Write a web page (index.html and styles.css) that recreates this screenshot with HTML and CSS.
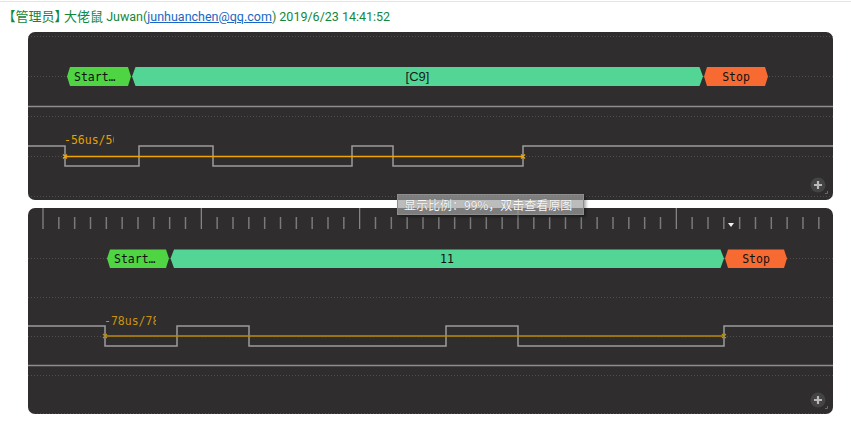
FILE: index.html
```html
<!DOCTYPE html>
<html lang="zh-CN">
<head>
<meta charset="utf-8">
<title>消息</title>
<link rel="stylesheet" href="styles.css">
</head>
<body>
<div class="msg">
  <div class="meta"><span class="role">【管理员】</span><span class="nick">大佬鼠</span> Juwan(<a class="mail" href="#">junhuanchen@qq.com</a>) 2019/6/23 14:41:52</div>
  <div class="shots">
    <div class="panel panel-a">
      <svg class="wave" width="805" height="168" viewBox="0 0 805 168">
        <g class="dots">
          <line x1="0" y1="4.5" x2="805" y2="4.5"/>
          <line x1="0" y1="44.5" x2="805" y2="44.5"/>
          <line x1="0" y1="84.5" x2="805" y2="84.5"/>
          <line x1="0" y1="124.5" x2="805" y2="124.5"/>
          <line x1="0" y1="164.5" x2="805" y2="164.5"/>
        </g>
        <line class="divider" x1="0" y1="74.5" x2="805" y2="74.5"/>
        <polygon class="lbl-start" points="39,44.5 42,35 100,35 103,44.5 100,54 42,54"/>
        <polygon class="lbl-data" points="104,44.5 107.5,35 671.5,35 675,44.5 671.5,54 107.5,54"/>
        <polygon class="lbl-stop" points="676,44.5 679,35 737,35 740,44.5 737,54 679,54"/>
        <text class="t-mono" x="46" y="49">Start…</text>
        <text class="t-sans" x="389.5" y="49" text-anchor="middle">[C9]</text>
        <text class="t-mono" x="708" y="49" text-anchor="middle">Stop</text>
        <polyline class="sig" points="0,114 37,114 37,134 111,134 111,114 185,114 185,134 324,134 324,114 365,114 365,134 495,134 495,114 805,114"/>
        <line class="cur-a" x1="37" y1="124.5" x2="495" y2="124.5"/>
        <path class="mark-a" d="M35 122.5 L39 126.5 M39 122.5 L35 126.5 M493 122.5 L497 126.5 M497 122.5 L493 126.5"/>
        <svg x="36" y="100" width="50" height="16" overflow="hidden">
          <text class="t-meas-a" x="0" y="12">-56us/56</text>
        </svg>
        <g class="zoom">
          <circle cx="790" cy="153" r="7.5"/>
          <path class="plus" d="M786 153 H794 M790 149 V157"/>
          <path class="handle" d="M797 161.5 H799.5 V159"/>
        </g>
      </svg>
    </div>
    <div class="panel panel-b">
      <svg class="wave" width="805" height="206" viewBox="0 0 805 206" id="wave-b">
        <g class="dots">
          <line x1="0" y1="50.5" x2="805" y2="50.5"/>
          <line x1="0" y1="89.5" x2="805" y2="89.5"/>
          <line x1="0" y1="128.5" x2="805" y2="128.5"/>
          <line x1="0" y1="167.5" x2="805" y2="167.5"/>
          <line x1="0" y1="205.5" x2="805" y2="205.5"/>
        </g>
        <g class="ticks" id="ticks"></g>
        <polygon class="tri" points="700,15 706,15 703,19"/>
        <polygon class="lbl-start" points="79,50.5 82,41.5 138,41.5 141,50.5 138,60 82,60"/>
        <polygon class="lbl-data" points="142.5,50.5 146,41.5 692.5,41.5 696,50.5 692.5,60 146,60"/>
        <polygon class="lbl-stop" points="697,50.5 700,41.5 756,41.5 759,50.5 756,60 700,60"/>
        <text class="t-mono" x="86" y="55">Start…</text>
        <text class="t-mono" x="419" y="55" text-anchor="middle">11</text>
        <text class="t-mono" x="728" y="55" text-anchor="middle">Stop</text>
        <polyline class="sig" points="0,118 77,118 77,138 149,138 149,118 221,118 221,138 418,138 418,118 490,118 490,138 696,138 696,118 805,118"/>
        <line class="divider" x1="0" y1="157.5" x2="805" y2="157.5"/>
        <line class="cur-b" x1="77" y1="128" x2="696" y2="128"/>
        <path class="mark-b" d="M75 126 L79 130 M79 126 L75 130 M694 126 L698 130 M698 126 L694 130"/>
        <svg x="76" y="104" width="52" height="16" overflow="hidden">
          <text class="t-meas-b" x="0" y="12.5">-78us/78</text>
        </svg>
        <g class="zoom">
          <circle cx="790" cy="192" r="7.5"/>
          <path class="plus" d="M786 192 H794 M790 188 V196"/>
          <path class="handle" d="M797 200.5 H799.5 V198"/>
        </g>
      </svg>
    </div>
    <div class="tip">显示比例：99%，双击查看原图</div>
  </div>
</div>
<script src="ticks.js"></script>
</body>
</html>
```

FILE: ticks.js
```js
(function () {
  var g = document.getElementById('ticks');
  var ns = 'http://www.w3.org/2000/svg';
  for (var i = 0; i < 50; i++) {
    var x = (15 + i * 15.833).toFixed(2);
    var l = document.createElementNS(ns, 'line');
    var major = i % 10 === 0;
    l.setAttribute('x1', x);
    l.setAttribute('x2', x);
    l.setAttribute('y1', major ? '0' : '9');
    l.setAttribute('y2', '21');
    l.setAttribute('class', major ? 'tick major' : 'tick');
    g.appendChild(l);
  }
})();
```

FILE: styles.css
```css
html, body {
  margin: 0;
  padding: 0;
  background: #ffffff;
}

.msg {
  margin-top: 1px;
  border-top: 1px solid #e6e6e6;
}

.meta {
  height: 30px;
  line-height: 28px;
  padding-left: 9px;
  font-family: Roboto, "Noto Sans CJK SC", sans-serif;
  font-size: 12.5px;
  color: #12873c;
  white-space: nowrap;
}

.role {
  font-family: "Noto Sans CJK SC", sans-serif;
  font-size: 13px;
  font-feature-settings: "halt";
  margin-right: 3px;
}

.nick {
  font-family: "Noto Sans CJK SC", sans-serif;
  font-size: 13px;
}

.mail {
  color: #1a66c4;
  text-decoration: underline;
}

.shots {
  position: relative;
  display: flex;
  flex-direction: column;
  gap: 8px;
  padding-left: 28px;
}

.panel {
  width: 805px;
  background: #2f2d2e;
  border-radius: 7px;
  overflow: hidden;
}

.panel-a { height: 168px; }
.panel-b { height: 206px; }

.wave { display: block; }

.dots line {
  stroke: #4f4d4e;
  stroke-width: 1;
  stroke-dasharray: 1 2;
}

.divider {
  stroke: #8e8e8e;
  stroke-width: 1.3;
}

.sig {
  fill: none;
  stroke: #9c9c9c;
  stroke-width: 1.5;
}

.lbl-start { fill: #4fd543; }
.lbl-data { fill: #52d595; }
.lbl-stop { fill: #f76b33; }

.t-mono {
  font-family: "DejaVu Sans Mono", "Liberation Mono", monospace;
  font-size: 11.5px;
  fill: #111111;
}

.t-sans {
  font-family: "Liberation Sans", Arial, sans-serif;
  font-size: 13px;
  fill: #1a1a1a;
}

.cur-a { stroke: #f0a600; stroke-width: 1.5; }
.cur-b { stroke: #bd8a06; stroke-width: 1.5; }
.mark-a { stroke: #f0a600; stroke-width: 1.2; fill: none; }
.mark-b { stroke: #c0900a; stroke-width: 1.2; fill: none; }

.t-meas-a, .t-meas-b {
  font-family: "DejaVu Sans Mono", monospace;
  font-size: 11.5px;
}
.t-meas-a { fill: #e6a000; }
.t-meas-b { fill: #c99410; }

.tick {
  stroke: #7a7a7a;
  stroke-width: 1.5;
}
.tick.major { stroke: #8c8c8c; stroke-width: 1.2; }

.tri { fill: #f2f2f2; }

.zoom circle { fill: #454445; }
.zoom .plus { stroke: #b9b9b9; stroke-width: 2.2; fill: none; }
.zoom .handle { stroke: #6a6a6a; stroke-width: 1; fill: none; }

.tip {
  position: absolute;
  left: 397px;
  top: 162px;
  width: 179px;
  height: 19px;
  border: 1px solid #8e8e8e;
  background: rgba(160, 160, 160, 0.7);
  box-shadow: 2px 2px 3px rgba(0, 0, 0, 0.35);
  font-family: "Noto Sans CJK SC", sans-serif;
  font-size: 12px;
  line-height: 19px;
  color: #f8f8f8;
  text-shadow: 0 0 1px #777;
  padding-left: 6px;
  box-sizing: content-box;
  white-space: nowrap;
}
```
